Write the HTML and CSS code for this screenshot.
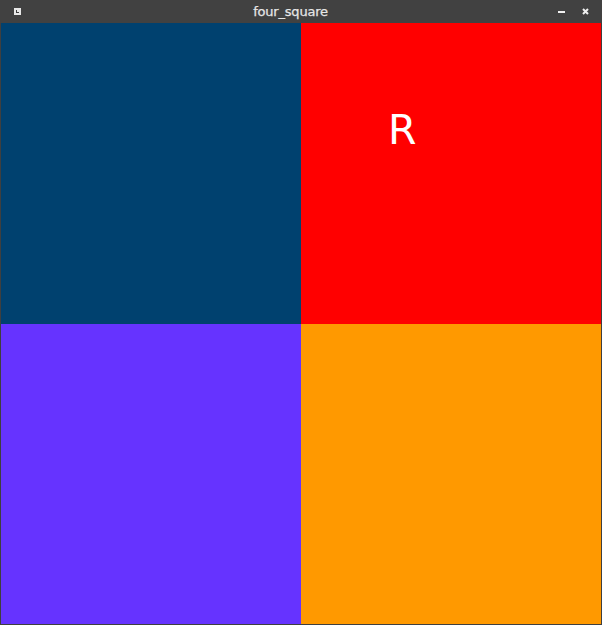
FILE: index.html
```html
<!DOCTYPE html>
<html>
<head>
<meta charset="utf-8">
<link rel="stylesheet" href="styles.css">
</head>
<body>
<div class="window">
  <div class="titlebar">
    <span class="menu-icon"><svg width="7" height="7" viewBox="0 0 7 7"><rect width="7" height="7" fill="#e8e8e8"/><rect x="2" y="2" width="1" height="3" fill="#3d3d3d"/><rect x="2" y="4" width="3" height="1" fill="#3d3d3d"/></svg></span>
    <span class="title">four_square</span>
    <span class="controls">
      <svg class="min" width="7" height="3" viewBox="0 0 7 3"><rect y="1" width="7" height="2" fill="#f0f0f0"/></svg>
      <svg class="close" width="7" height="7" viewBox="0 0 7 7"><path d="M1 1L6 6M6 1L1 6" stroke="#f0f0f0" stroke-width="2"/></svg>
    </span>
  </div>
  <div class="grid">
    <div class="sq blue"></div>
    <div class="sq red"><span class="letter">R</span></div>
    <div class="sq purple"></div>
    <div class="sq orange"></div>
  </div>
</div>
</body>
</html>
```
FILE: styles.css
```css
html, body {
  margin: 0;
  padding: 0;
  background: #3c3c3c;
}
.window {
  width: 602px;
  height: 625px;
  display: flex;
  flex-direction: column;
  background: #3f3f3f;
}
.titlebar {
  height: 23px;
  display: flex;
  align-items: center;
  background: #414141;
  font-family: "DejaVu Sans", sans-serif;
  font-size: 13px;
  color: #e6e6e6;
}
.menu-icon {
  display: flex;
  margin-left: 14px;
  margin-top: -1px;
}
.title {
  flex: 1;
  text-align: center;
  margin-left: 2px;
  margin-top: -1px;
  letter-spacing: -0.2px;
  -webkit-text-stroke: 0.25px #e6e6e6;
}
.controls {
  display: flex;
  align-items: center;
  gap: 17px;
  margin-right: 13px;
  margin-top: -1px;
}
.grid {
  display: grid;
  grid-template-columns: 300px 300px;
  grid-template-rows: 301px 300px;
  margin-left: 1px;
}
.sq {
  box-sizing: border-box;
}
.blue { background: #00416f; }
.red {
  background: #ff0000;
  padding: 83px 0 0 87px;
}
.purple { background: #6633ff; }
.orange { background: #ff9900; }
.letter {
  font-family: "DejaVu Sans", sans-serif;
  font-size: 41px;
  color: #ffffff;
  line-height: 48px;
}
```
